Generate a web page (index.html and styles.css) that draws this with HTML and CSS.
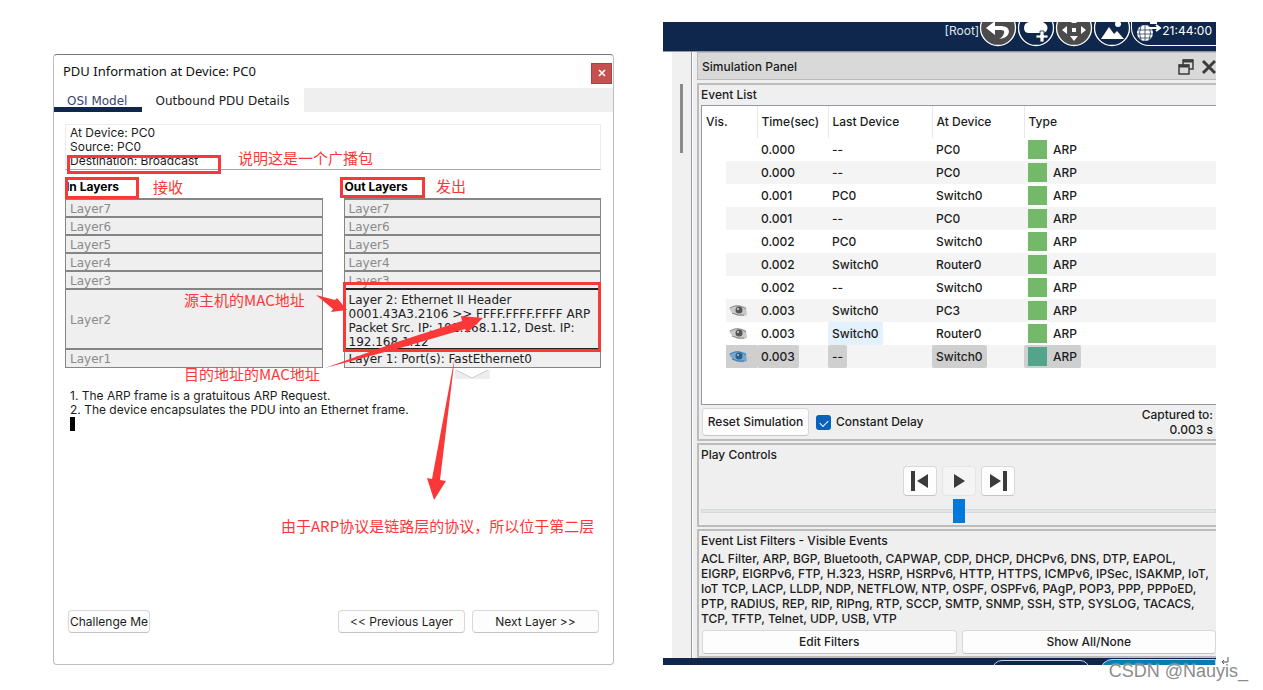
FILE: index.html
```html
<!DOCTYPE html>
<html lang="zh-CN">
<head>
<meta charset="utf-8">
<title>PDU Information</title>
<link rel="stylesheet" href="styles.css">
</head>
<body>
<main class="page">
  <section class="pdu">
    <header class="pdu-title"><h1>PDU Information at Device: PC0</h1><button class="close" aria-label="Close"><svg width="8" height="8" viewBox="0 0 8 8"><path d="M1 1l6 6M7 1L1 7" stroke="#fff" stroke-width="1.6"/></svg></button></header>
    <nav class="tabs"><button class="tab active">OSI Model</button><button class="tab">Outbound PDU Details</button></nav>
    <div class="pdu-body">
      <div class="device">At Device: PC0<br>Source: PC0<br>Destination: Broadcast</div>
      <div class="stacks">
        <div class="stack">
          <h2>In Layers</h2>
          <ul class="layers"><li>Layer7</li><li>Layer6</li><li>Layer5</li><li>Layer4</li><li>Layer3</li><li class="tall">Layer2</li><li>Layer1</li></ul>
        </div>
        <div class="stack">
          <h2>Out Layers</h2>
          <ul class="layers"><li>Layer7</li><li>Layer6</li><li>Layer5</li><li>Layer4</li><li class="before">Layer3</li><li class="tall on">Layer 2: Ethernet II Header<br>0001.43A3.2106 &gt;&gt; FFFF.FFFF.FFFF ARP<br>Packet Src. IP: 192.168.1.12, Dest. IP:<br>192.168.1.12</li><li class="on">Layer 1: Port(s): FastEthernet0</li></ul>
          <svg class="drop" width="35" height="9" viewBox="0 0 35 9"><path d="M0 0h35v9H0z" fill="#ededed"/><path d="M1 0l16 8L33 0" fill="#fff" stroke="#ccc"/></svg>
        </div>
      </div>
      <div class="notes">1. The ARP frame is a gratuitous ARP Request.<br>2. The device encapsulates the PDU into an Ethernet frame.<div class="caret"></div></div>
      <footer class="actions"><button class="btn challenge">Challenge Me</button><button class="btn step">&lt;&lt; Previous Layer</button><button class="btn step">Next Layer &gt;&gt;</button></footer>
    </div>
    <div class="box box-dest"></div><div class="box box-in"></div><div class="box box-out"></div><div class="box box-l2"></div>
    <svg class="arrows" width="560" height="600" viewBox="53 54 560 600" fill="#fb3838">
      <path d="M316 295L335 300L337 298L347 310L331 312L333 309Z"/>
      <path d="M325 368L400 341L462 321L461 316L483 318L467 333L465 329L400 348Z"/>
      <path d="M455 356L432 479L427 478L434 500L446 481L440 480Z"/>
    </svg>
    <span class="mark m1">说明这是一个广播包</span><span class="mark m2">接收</span><span class="mark m3">发出</span><span class="mark m4">源主机的MAC地址</span><span class="mark m5">目的地址的MAC地址</span><span class="mark m6">由于ARP协议是链路层的协议，所以位于第二层</span>
  </section>

  <section class="sim">
    <header class="toolbar">
      <span>[Root]</span>
      <button aria-label="Back"><svg width="38" height="29" viewBox="0 0 38 29"><circle cx="19" cy="6" r="17.5" fill="#4b4b4b" stroke="#fff" stroke-width="1.3"/><path d="M16 -1L7 6l9 7V8h6q4 0 3 3-1 4-5 6 9-1 10-7 0-6-8-6h-6z" fill="#fff"/></svg></button>
      <button aria-label="New cluster"><svg width="38" height="29" viewBox="0 0 38 29"><circle cx="19" cy="6" r="17.5" fill="#0f274c" stroke="#fff" stroke-width="1.3"/><path d="M12 0h14q6 3 4 8-1 3-5 3H12q-5 0-5-5t5-6" fill="#fff"/><path d="M23 9h4v4h4v3h-4v4h-4v-4h-4v-3h4z" fill="#fff" stroke="#0f274c" stroke-width=".8"/></svg></button>
      <button aria-label="Move object"><svg width="38" height="29" viewBox="0 0 38 29"><circle cx="19" cy="6" r="17.5" fill="#4b4b4b" stroke="#fff" stroke-width="1.3"/><path d="M7 8l5-4v8zM31 8l-5-4v8zM15 14h8l-4 5zM16 0h6l-1 1h-4zM17 6h4v4h-4z" fill="#fff"/></svg></button>
      <button aria-label="Set background"><svg width="38" height="29" viewBox="0 0 38 29"><circle cx="19" cy="6" r="17.5" fill="#0f274c" stroke="#fff" stroke-width="1.3"/><path d="M8 17L16 5l5 7 3-3 7 8z" fill="#fff"/><circle cx="25" cy="2" r="3" fill="#fff"/></svg></button>
      <button class="clock"><svg width="27" height="22" viewBox="0 0 27 22"><circle cx="10" cy="11" r="8" fill="#fff"/><path d="M2 8h16M2 12h16M4 16h12M10 3v16M6 4q-3 7 0 14M14 4q3 7 0 14" fill="none" stroke="#0f274c" stroke-width=".7"/><path d="M12 6h13M15 1h7M21 3l4 3-4 3" fill="none" stroke="#fff" stroke-width="2"/></svg>21:44:00</button>
    </header>
    <div class="sim-main">
      <div class="canvas-edge"><div class="scroll"></div></div>
      <div class="panel">
        <div class="panel-title"><h2>Simulation Panel</h2>
          <svg width="38" height="18" viewBox="0 0 38 18" fill="none" stroke="#3c3c3c"><path d="M5 7V2h10v9h-4" stroke-width="1.5"/><path d="M5 3h10M1 8h10" stroke-width="3"/><path d="M1 7h10v9H1z" stroke-width="1.5"/><path d="M25 3l12 12M37 3L25 15" stroke-width="3"/></svg></div>
        <section class="group events">
          <h3>Event List</h3>
          <div class="list">
          <table>
            <colgroup><col class="c0"><col class="c1"><col class="c2"><col class="c3"><col class="c4"><col></colgroup>
            <thead><tr><th colspan="2">Vis.</th><th>Time(sec)</th><th>Last Device</th><th>At Device</th><th>Type</th></tr></thead>
            <tbody>
              <tr><td></td><td></td><td><span>0.000</span></td><td><span>--</span></td><td><span>PC0</span></td><td><span><i></i>ARP</span></td></tr>
              <tr><td></td><td></td><td><span>0.000</span></td><td><span>--</span></td><td><span>PC0</span></td><td><span><i></i>ARP</span></td></tr>
              <tr><td></td><td></td><td><span>0.001</span></td><td><span>PC0</span></td><td><span>Switch0</span></td><td><span><i></i>ARP</span></td></tr>
              <tr><td></td><td></td><td><span>0.001</span></td><td><span>--</span></td><td><span>PC0</span></td><td><span><i></i>ARP</span></td></tr>
              <tr><td></td><td></td><td><span>0.002</span></td><td><span>PC0</span></td><td><span>Switch0</span></td><td><span><i></i>ARP</span></td></tr>
              <tr><td></td><td></td><td><span>0.002</span></td><td><span>Switch0</span></td><td><span>Router0</span></td><td><span><i></i>ARP</span></td></tr>
              <tr><td></td><td></td><td><span>0.002</span></td><td><span>--</span></td><td><span>Switch0</span></td><td><span><i></i>ARP</span></td></tr>
              <tr><td></td><td class="eye"><svg width="20" height="14" viewBox="0 0 20 14"><path d="M0 4Q7-1 17 3l1 8Q12 14 4 10z" fill="#c9c9c9"/><path d="M1 4Q9-1 17 5M3 9q6 3 12 2" fill="none" stroke="#8a8a8a"/><circle cx="10" cy="6" r="3.5" fill="#555"/><circle cx="9" cy="5" r="1" fill="#ddd"/></svg></td><td><span>0.003</span></td><td><span>Switch0</span></td><td><span>PC3</span></td><td><span><i></i>ARP</span></td></tr>
              <tr><td></td><td class="eye"><svg width="20" height="14" viewBox="0 0 20 14"><path d="M0 4Q7-1 17 3l1 8Q12 14 4 10z" fill="#c9c9c9"/><path d="M1 4Q9-1 17 5M3 9q6 3 12 2" fill="none" stroke="#8a8a8a"/><circle cx="10" cy="6" r="3.5" fill="#555"/><circle cx="9" cy="5" r="1" fill="#ddd"/></svg></td><td><span>0.003</span></td><td><span class="hover">Switch0</span></td><td><span>Router0</span></td><td><span><i></i>ARP</span></td></tr>
              <tr class="selected"><td></td><td class="eye"><svg width="20" height="14" viewBox="0 0 20 14"><path d="M0 4Q7-1 17 3l1 8Q12 14 4 10z" fill="#79a8cc"/><path d="M1 4Q9-1 17 5M3 9q6 3 12 2" fill="none" stroke="#477da8"/><circle cx="10" cy="6" r="3.5" fill="#255f8c"/><circle cx="9" cy="5" r="1" fill="#a8cce5"/></svg></td><td><span>0.003</span></td><td><span>--</span></td><td><span>Switch0</span></td><td><span><i></i>ARP</span></td></tr>
            </tbody>
          </table>
          </div>
          <div class="reset"><button class="btn">Reset Simulation</button><input type="checkbox" id="delay" checked><label for="delay">Constant Delay</label><div class="captured">Captured to:<br>0.003 s</div></div>
        </section>
        <section class="group play">
          <h3>Play Controls</h3>
          <div class="controls">
            <button class="btn" aria-label="Back"><svg width="18" height="20" viewBox="0 0 18 20" fill="#3b3b3b"><path d="M0 0h4v20H0zM17 3v14L6 10z"/></svg></button>
            <button class="btn flat" aria-label="Play"><svg width="18" height="20" viewBox="0 0 18 20" fill="#3b3b3b"><path d="M4 3v14l11-7z"/></svg></button>
            <button class="btn" aria-label="Forward"><svg width="18" height="20" viewBox="0 0 18 20" fill="#3b3b3b"><path d="M14 0h4v20h-4zM1 3v14l11-7z"/></svg></button>
          </div>
          <input type="range" aria-label="Play speed" min="0" max="100" value="50">
        </section>
        <section class="group filters">
          <h3>Event List Filters - Visible Events</h3>
          <p>ACL Filter, ARP, BGP, Bluetooth, CAPWAP, CDP, DHCP, DHCPv6, DNS, DTP, EAPOL,<br>EIGRP, EIGRPv6, FTP, H.323, HSRP, HSRPv6, HTTP, HTTPS, ICMPv6, IPSec, ISAKMP, IoT,<br>IoT TCP, LACP, LLDP, NDP, NETFLOW, NTP, OSPF, OSPFv6, PAgP, POP3, PPP, PPPoED,<br>PTP, RADIUS, REP, RIP, RIPng, RTP, SCCP, SMTP, SNMP, SSH, STP, SYSLOG, TACACS,<br>TCP, TFTP, Telnet, UDP, USB, VTP</p>
          <div class="filter-actions"><button class="btn">Edit Filters</button><button class="btn">Show All/None</button></div>
        </section>
      </div>
    </div>
    <footer class="bottom"><div class="pill"></div><div class="pill blue"></div></footer>
  </section>
</main>
<svg class="return" width="8" height="8" viewBox="0 0 8 8" fill="none" stroke="#555"><path d="M7 0v5H1M3 3L1 5l2 2"/></svg>
<div class="watermark">CSDN @Nauyis_</div>
</body>
</html>
```

FILE: styles.css
```css
* { box-sizing: border-box; }
body { margin: 0; background: #fff; color: #1c1c1c; font: 12px/14px Inter, "Liberation Sans", sans-serif; overflow: hidden; }
h1, h2, h3, p, ul { margin: 0; padding: 0; font-size: 12px; font-weight: inherit; }
button { font: inherit; color: inherit; padding: 0; border: 0; background: none; white-space: nowrap; }
svg { display: block; }
.page { display: grid; grid-template-columns: 561fr 553fr; gap: 49px; padding: 22px 47px 0 53px; }
.btn { background: #fdfdfd; border: 1px solid #d8d8d8; border-bottom-color: #c4c4c4; border-radius: 4px; }

.pdu { position: relative; margin-top: 32px; display: flex; flex-direction: column; border: 1px solid #bdbdbd; border-top-color: #777; border-radius: 4px; }
.pdu-title { display: flex; justify-content: space-between; height: 33px; padding: 0 1px 2px 9px; align-items: center; }
.pdu-title h1 { font: 13px/18px "Noto Sans", sans-serif; color: #111; }
.close { width: 21px; height: 21px; margin-top: 5px; background: #c55050; border: 1px solid #b04040; display: grid; place-items: center; }
.tabs { display: flex; background: #efefef; height: 24px; font: 12px/24px "DejaVu Sans", sans-serif; }
.tab { background: #fff; padding: 1px 14px 0 13px; }
.tab.active { color: #36446b; border-bottom: 5px solid #0f274c; line-height: 16px; padding: 5px 15px 0 13px; }
.pdu-body { flex: 1; display: flex; flex-direction: column; padding: 12px 12px 31px 11px; }
.device { border: 1px solid #ededed; border-bottom-color: #a8a8a8; padding: 1px 4px 2px; height: 46px; }
.stacks { display: grid; grid-template-columns: 1fr 1fr; gap: 21px; margin-top: 8px; }
.stack h2 { font-weight: 700; line-height: 18px; height: 20px; padding-left: 1px; color: #000; }
.layers { list-style: none; border: 1px solid #858585; border-top-width: 2px; background: #efefef; font: 12px/14px "DejaVu Sans", sans-serif; color: #8a8a8a; }
.layers li { height: 18px; line-height: 18px; padding-left: 4px; border-bottom: 2px solid #858585; white-space: nowrap; }
.layers li:last-child { border-bottom: 0; height: 17px; }
.layers .tall { height: 60px; line-height: 60px; }
.layers .before { border-bottom-color: #222; }
.layers .on { color: #222; }
.layers .tall.on { line-height: 14px; padding-top: 3px; border-color: #222; }
.drop { margin: 2px 0 0 111px; }
.notes { padding: 10px 5px 0; }
.caret { width: 5px; height: 14px; background: #000; }
.actions { margin-top: auto; display: flex; gap: 7px; padding: 0 2px 0 3px; }
.actions .btn { height: 23px; }
.challenge { width: 82px; margin-right: auto; }
.step { width: 127px; }
.box { position: absolute; border: 3px solid #fb3838; }
.box-dest { left: 13px; top: 100px; width: 154px; height: 19px; }
.box-in { left: 11px; top: 122px; width: 74px; height: 22px; }
.box-out { left: 286px; top: 122px; width: 85px; height: 21px; }
.box-l2 { left: 289px; top: 227px; width: 258px; height: 70px; }
.arrows { position: absolute; left: -1px; top: -1px; }
.mark { position: absolute; color: #fb3838; font: 15px/20px "Noto Sans CJK SC", sans-serif; white-space: nowrap; }
.m1 { left: 184px; top: 93px; } .m2 { left: 99px; top: 122px; } .m3 { left: 382px; top: 121px; }
.m4 { left: 130px; top: 235px; } .m5 { left: 130px; top: 309px; } .m6 { left: 227px; top: 461px; }

.sim { display: flex; flex-direction: column; overflow: hidden; min-width: 0; font-weight: 500; }
.toolbar { height: 29px; background: #0f274c; color: #dfe4ec; display: flex; justify-content: flex-end; overflow: hidden; line-height: 17px; font-weight: 400; }
.clock { display: flex; height: 24px; border: 1px solid #fff; border-top: 0; border-right: 0; border-radius: 0 0 0 18px; padding: 0 4px 0 3px; line-height: 17px; color: #fff; }
.sim-main { display: flex; border-top: 1px solid #9297a0; }
.canvas-edge { width: 29px; flex: none; border-left: 9px solid #fff; background: #f0f0f0; border-right: 1px solid #9297a0; }
.scroll { width: 3px; height: 69px; margin: 32px 0 0 8px; background: #8a8a8a; }
.panel { flex: 1; min-width: 0; background: #efefef; border-left: 1px solid #fff; padding-left: 4px; }
.panel-title { height: 28px; display: flex; justify-content: space-between; align-items: center; background: #d9d9d9; border: 1px solid #bbb; border-right: 0; padding: 1px 0 0 4px; }
.group { border: 2px solid #bcbcbc; border-right: 0; margin-top: 2px; padding-left: 2px; }
.events { margin-top: 3px; }
.group h3 { line-height: 20px; }
.list { background: #fff; border: 1px solid #9297a0; border-right: 0; height: 300px; }
table { width: 100%; table-layout: fixed; border-collapse: collapse; }
th, td { padding: 0; text-align: left; font-weight: 500; white-space: nowrap; }
th { height: 32px; padding-left: 4px; border-right: 1px solid #e8e8e8; }
th:last-child { border: 0; }
td { height: 23px; }
td span { display: flex; align-items: center; width: max-content; height: 23px; padding: 0 4px; border-radius: 2px; }
.c0 { width: 24px; } .c1 { width: 31px; } .c2 { width: 71px; } .c3 { width: 104px; } .c4 { width: 92px; }
tbody tr:nth-child(even) td + td { background: #f4f4f4; }
td i { width: 19px; height: 19px; background: #74b869; margin-right: 6px; }
.hover { background: #e3f1fd; }
.selected span { background: #cfcfcf; }
tbody tr.selected td.eye { background: #cfcfcf; }
.selected i { background: #52a58b; }
.eye svg { margin-left: 3px; }
.reset { display: flex; align-items: center; height: 34px; padding-left: 1px; }
.reset .btn { width: 107px; height: 28px; }
.reset input { appearance: none; width: 15px; height: 15px; margin: 0 5px 0 7px; border-radius: 3px; background: #0862b8; display: grid; place-items: center; }
.reset input::after { content: ""; width: 7px; height: 4px; border: solid #fff; border-width: 0 0 1px 1px; transform: rotate(-45deg); }
.captured { margin-left: auto; text-align: right; line-height: 15px; padding-right: 3px; }
.controls { display: flex; justify-content: center; gap: 5px; margin-top: 1px; }
.controls .btn { width: 34px; height: 30px; display: grid; place-items: center; }
.controls .flat { background: #f4f4f4; border-color: #e5e5e5; }
input[type=range] { appearance: none; display: block; width: 100%; height: 24px; margin: 3px 0 2px; background: none; }
input[type=range]::-webkit-slider-runnable-track { height: 4px; background: #e2e5e5; border: 1px solid #d5d9d8; }
input[type=range]::-webkit-slider-thumb { appearance: none; width: 12px; height: 24px; margin-top: -11px; background: #0078dc; }
.filters p { white-space: nowrap; line-height: 15px; }
.filter-actions { display: grid; grid-template-columns: 1fr 1fr; gap: 5px; padding: 4px 0 2px 1px; }
.filter-actions .btn { height: 24px; }
.bottom { flex: none; display: flex; justify-content: flex-end; gap: 10px; height: 7px; background: #0f274c; overflow: hidden; padding-top: 2px; }
.pill { width: 98px; height: 20px; border: 1px solid #ccd; border-radius: 12px; }
.pill.blue { width: 116px; background: #087db5; border-radius: 12px 0 0 0; margin-top: -1px; }
.watermark { position: absolute; right: 15px; top: 660px; font: 18px/22px "Liberation Sans", sans-serif; color: #8c8c8c; text-shadow: 0 0 2px #fff; }
.return { position: absolute; right: 34px; top: 657px; }
```
